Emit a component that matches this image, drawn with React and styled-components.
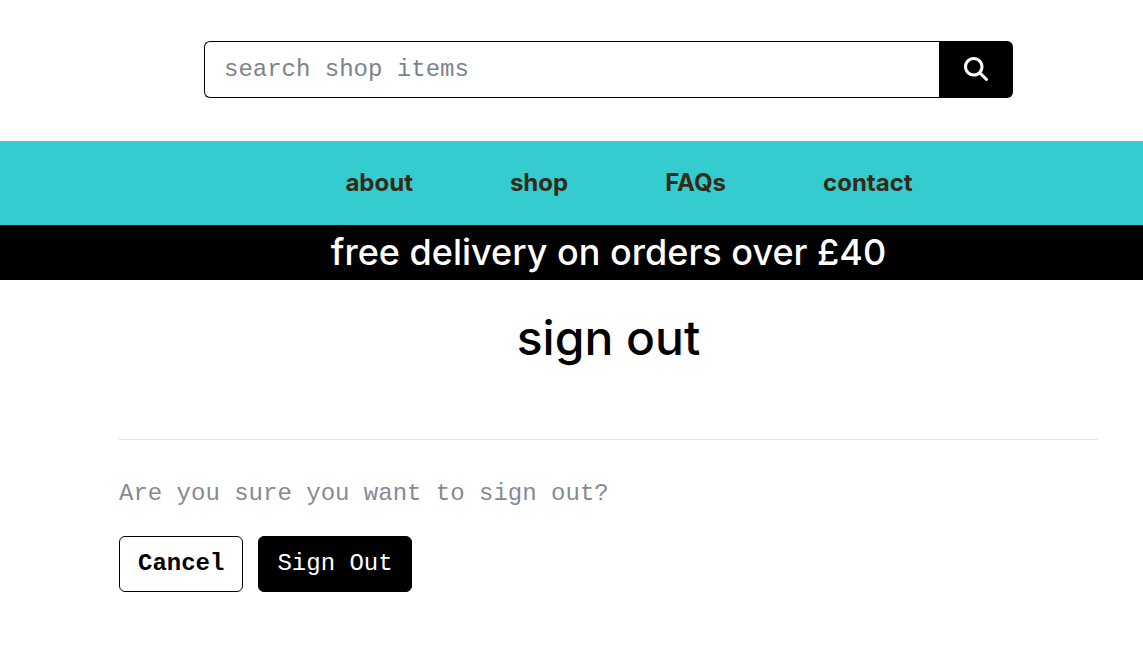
import React from "react";
import styled, { createGlobalStyle } from "styled-components";
import { FaMagnifyingGlass } from "react-icons/fa6";

const GlobalStyle = createGlobalStyle`
  *, *::before, *::after { box-sizing: border-box; }
  body {
    margin: 0;
    background: #fff;
    color: #000;
    font-family: Inter, sans-serif;
  }
`;

const mono = `"Liberation Mono", "Courier New", monospace`;

const Page = styled.div`
  min-height: 100vh;
`;

const Column = styled.div`
  padding: 0 45px 0 119px;
`;

const SearchForm = styled.form`
  display: flex;
  padding: 41px 85px 43px;
`;

const SearchInput = styled.input`
  flex: 1;
  min-width: 0;
  height: 57px;
  padding: 0 19px;
  border: 1px solid #000;
  border-right: 0;
  border-radius: 6px 0 0 6px;
  background: #fff;
  font: 24px ${mono};
  outline: 0;
  &::placeholder { color: #7b848c; opacity: 1; }
`;

const SearchButton = styled.button`
  display: flex;
  align-items: center;
  justify-content: center;
  width: 74px;
  height: 57px;
  padding: 0 1px 1px 0;
  border: 0;
  border-radius: 0 6px 6px 0;
  background: #000;
  color: #fff;
  font-size: 24px;
`;

const Nav = styled.nav`
  display: flex;
  justify-content: center;
  gap: 97px;
  padding: 24px 0 24px 115px;
  background: #35cccf;
`;

const NavLink = styled.a`
  color: #332a17;
  font-size: 24px;
  font-weight: 700;
  line-height: 36px;
  text-decoration: none;
`;

const Banner = styled.p`
  margin: 0;
  padding: 5px 0 5px 74px;
  background: #000;
  color: #fff;
  font-size: 36px;
  font-weight: 500;
  line-height: 45px;
  text-align: center;
`;

const Title = styled.h1`
  margin: 0;
  padding: 29px 0 72px;
  font-size: 48px;
  font-weight: 500;
  line-height: 58px;
  text-align: center;
`;

const Rule = styled.hr`
  margin: 0 0 36px;
  border: 0;
  border-top: 1px solid #e3e3e3;
`;

const Question = styled.p`
  margin: 0 0 24px;
  color: #838b93;
  font: 24px/36px ${mono};
`;

const Actions = styled.div`
  display: flex;
  gap: 15px;
`;

const Action = styled.button`
  height: 56px;
  padding: 0 18px 2px;
  border: 1px solid #000;
  border-radius: 6px;
  background: ${({ $solid }) => ($solid ? "#000" : "#fff")};
  color: ${({ $solid }) => ($solid ? "#fff" : "#000")};
  font: ${({ $solid }) => ($solid ? 400 : 700)} 24px ${mono};
`;

export default function App() {
  return (
    <Page>
      <GlobalStyle />
      <Column as="header">
        <SearchForm role="search" onSubmit={(e) => e.preventDefault()}>
          <SearchInput type="text" aria-label="search shop items" placeholder="search shop items" />
          <SearchButton type="submit" aria-label="search"><FaMagnifyingGlass /></SearchButton>
        </SearchForm>
      </Column>
      <Nav>
        {["about", "shop", "FAQs", "contact"].map((name) => (
          <NavLink key={name} href={`#${name}`}>{name}</NavLink>
        ))}
      </Nav>
      <Banner>free delivery on orders over £40</Banner>
      <Column as="main">
        <Title>sign out</Title>
        <Rule />
        <Question>Are you sure you want to sign out?</Question>
        <Actions>
          <Action type="button">Cancel</Action>
          <Action type="button" $solid>Sign Out</Action>
        </Actions>
      </Column>
    </Page>
  );
}
